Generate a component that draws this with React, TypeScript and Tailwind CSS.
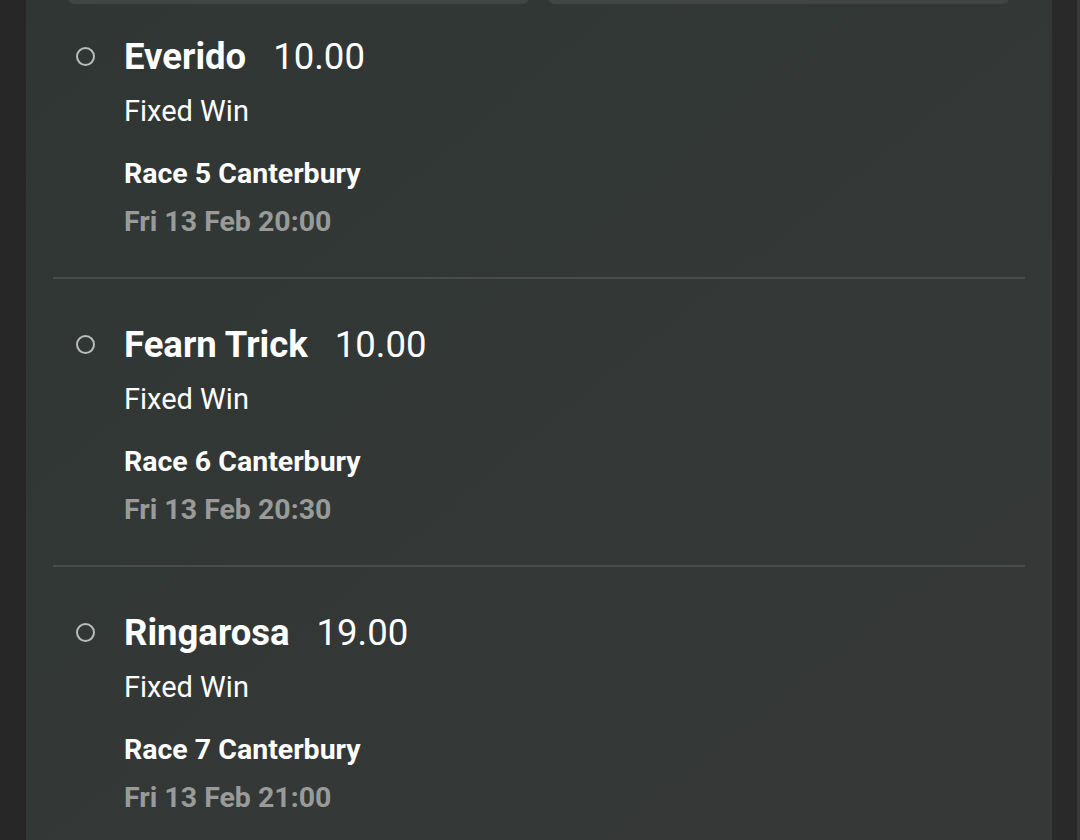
const bets = [
  { name: "Everido", price: "10.00", race: "Race 5 Canterbury", time: "Fri 13 Feb 20:00" },
  { name: "Fearn Trick", price: "10.00", race: "Race 6 Canterbury", time: "Fri 13 Feb 20:30" },
  { name: "Ringarosa", price: "19.00", race: "Race 7 Canterbury", time: "Fri 13 Feb 21:00" },
];

function BetRow({ bet, last }: { bet: (typeof bets)[number]; last: boolean }) {
  return (
    <div className={last ? "" : "border-b-2 border-[#494e4c]"}>
      <div className="flex items-start pb-[37px]">
        <div className="flex h-[42px] w-[71px] shrink-0 items-center justify-center pr-[6px] pt-[1px]">
          <span className="block h-[19px] w-[19px] rounded-full border-2 border-[#b9bcbb]" />
        </div>
        <div className="min-w-0">
          <div className="flex items-baseline gap-[27px] pt-[1px] leading-[42px] text-white">
            <span className="text-[36.5px] font-bold">{bet.name}</span>
            <span className="text-[36.5px] font-normal">{bet.price}</span>
          </div>
          <div className="mt-[15px] text-[29px] leading-[36px] text-white">Fixed Win</div>
          <div className="mt-[27px] text-[28.5px] font-bold leading-[36px] text-white">
            {bet.race}
          </div>
          <div className="mt-[12px] text-[28.5px] font-bold leading-[36px] text-[#999b9a]">
            {bet.time}
          </div>
        </div>
      </div>
    </div>
  );
}

export default function App() {
  return (
    <div
      className="flex h-[840px] w-full overflow-hidden bg-[#282828]"
      style={{ fontFamily: "Roboto, 'Liberation Sans', sans-serif" }}
    >
      <div className="w-[26px] shrink-0 bg-[#272727]" />
      <div className="h-full w-[1026px] shrink-0 overflow-hidden bg-gradient-to-br from-[#303634] via-[#333836] to-[#363837]">
        <div className="-mt-[40px] grid grid-cols-2 gap-[17px] pl-[41px] pr-[42px]">
          <div className="h-[44px] rounded-[8px] bg-[#414644]" />
          <div className="h-[44px] rounded-[8px] bg-[#414644]" />
        </div>
        <div className="px-[27px] pt-[31px]">
          {bets.map((bet, i) => (
            <div key={bet.name} className={i === 0 ? "" : "pt-[44px]"}>
              <BetRow bet={bet} last={i === bets.length - 1} />
            </div>
          ))}
        </div>
      </div>
      <div className="w-[25px] shrink-0 bg-[#292929]" />
      <div className="flex-1 bg-[#3a3a3a]" />
    </div>
  );
}
